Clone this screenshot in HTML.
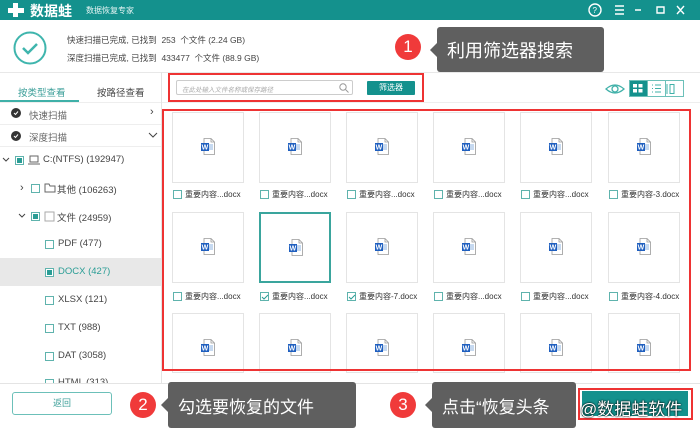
<!DOCTYPE html>
<html><head><meta charset="utf-8"><style>
*{margin:0;padding:0;box-sizing:border-box}
body{width:700px;height:428px;overflow:hidden;background:#fff;font-family:"Liberation Sans","Noto Sans CJK SC",sans-serif;position:relative;color:#333}
.a{position:absolute}
.t{font-size:9px;color:#444;white-space:nowrap}
.cb{position:absolute;width:9px;height:9px;border:1px solid #5fb3ad;background:#fff}
.card{position:absolute;width:72px;height:71px;border:1px solid #e4e4e4;background:#fff}
.w{position:absolute;left:28px;top:25px;width:14px;height:17px}
.lbl{position:absolute;font-size:8px;color:#333;white-space:nowrap}
.bub{position:absolute;background:#5f5f5f;color:#fff;font-size:17px;border-radius:3px;display:flex;align-items:center;padding-left:10px}
.bub:before{content:"";position:absolute;left:-7px;top:50%;margin-top:-7px;border:7px solid transparent;border-left:0;border-right-color:#5f5f5f}
.num{position:absolute;width:26px;height:26px;border-radius:50%;background:#f03a3a;color:#fff;font-size:17px;text-align:center;line-height:26px}
.tree{position:absolute;font-size:9.5px;color:#444;white-space:nowrap}
</style></head><body>
<!-- title bar -->
<div class="a" style="left:0;top:0;width:700px;height:20px;background:#14918d"></div>
<svg class="a" style="left:7px;top:2px" width="18" height="16"><path d="M6 1h5v5h6v5h-6v4H6v-4H1V6h5z" fill="#fff"/></svg>
<div class="a" style="left:30px;top:1px;color:#fff;font-size:14px;font-weight:bold">数据蛙</div>
<div class="a" style="left:86px;top:5px;color:#e8f6f5;font-size:8px">数据恢复专家</div>
<svg class="a" style="left:588px;top:3px" width="105" height="14" fill="none" stroke="#fff" stroke-width="1.4"><circle cx="7" cy="7" r="6"/><text x="4.5" y="10" font-size="8" fill="#fff" stroke="none" font-family="Liberation Sans">?</text><path d="M27 3h9M27 7h9M27 11h9M47 7h6M69 4h7v6h-7zM89 3l7 8M96 3l-7 8"/></svg>
<!-- header -->
<svg class="a" style="left:13px;top:31px" width="34" height="34" fill="none" stroke="#3fb5ad" stroke-width="2"><circle cx="17" cy="17" r="15.5"/><path d="M10 17l5 5 9-9" stroke-width="2.5"/></svg>
<div class="t a" style="left:67px;top:34px;font-size:8.5px">快速扫描已完成, 已找到 &nbsp;253 &nbsp;个文件 (2.24 GB)</div>
<div class="t a" style="left:67px;top:52px;font-size:8.5px">深度扫描已完成, 已找到 &nbsp;433477 &nbsp;个文件 (88.9 GB)</div>
<div class="a" style="left:0;top:72px;width:700px;height:1px;background:#e8e8e8"></div>
<!-- tabs -->
<div class="a" style="left:18px;top:85px;font-size:9.5px;color:#3a9e98">按类型查看</div>
<div class="a" style="left:97px;top:85px;font-size:9.5px;color:#444">按路径查看</div>
<div class="a" style="left:0;top:100px;width:79px;height:2px;background:#3fb0a8"></div>
<div class="a" style="left:161px;top:72px;width:1px;height:311px;background:#e4e4e4"></div>
<div class="a" style="left:0;top:102px;width:161px;height:1px;background:#eee"></div>
<!-- search -->
<div class="a" style="left:176px;top:80px;width:177px;height:15px;border:1px solid #ccc;border-radius:2px"></div>
<div class="a" style="left:182px;top:84px;font-size:6.5px;color:#aaa;font-style:italic">在此处输入文件名称或保存路径</div>
<svg class="a" style="left:339px;top:83px" width="10" height="10" fill="none" stroke="#999"><circle cx="4" cy="4" r="3.2"/><path d="M6.5 6.5l3 3"/></svg>
<div class="a" style="left:367px;top:81px;width:48px;height:14px;background:#14918d;color:#fff;font-size:8px;text-align:center;line-height:14px;border-radius:1px">筛选器</div>
<div class="a" style="left:168px;top:73px;width:256px;height:29px;border:2px solid #ee3333"></div>
<svg class="a" style="left:605px;top:82px" width="20" height="14" fill="none" stroke="#3fb0a8" stroke-width="1.3"><path d="M1 7Q10-1 19 7Q10 15 1 7z"/><circle cx="10" cy="7" r="3"/></svg>
<div class="a" style="left:629px;top:80px;width:55px;height:17px;border:1px solid #6cc0b9"></div>
<div class="a" style="left:630px;top:81px;width:17px;height:15px;background:#14918d"></div>
<svg class="a" style="left:633px;top:84px" width="10" height="9" fill="#fff"><rect x="0" y="0" width="4" height="3.5"/><rect x="5.5" y="0" width="4" height="3.5"/><rect x="0" y="5" width="4" height="3.5"/><rect x="5.5" y="5" width="4" height="3.5"/></svg>
<svg class="a" style="left:652px;top:84px" width="30" height="10" fill="none" stroke="#3fb0a8"><path d="M0 1h1M3 1h6M0 4.5h1M3 4.5h6M0 8h1M3 8h6"/><path d="M15 0h-0v10M18 0.5h4v9h-4z"/></svg>
<div class="a" style="left:647px;top:80px;width:1px;height:17px;background:#6cc0b9"></div>
<div class="a" style="left:665px;top:80px;width:1px;height:17px;background:#6cc0b9"></div>
<div class="a" style="left:162px;top:102px;width:538px;height:1px;background:#eee"></div>
<!-- left tree -->
<svg class="a" style="left:11px;top:108px" width="12" height="36"><circle cx="5" cy="5" r="5" fill="#333"/><path d="M3 5l1.5 1.5L7 3.5" stroke="#fff" fill="none"/><circle cx="5" cy="28" r="5" fill="#333"/><path d="M3 28l1.5 1.5L7 26.5" stroke="#fff" fill="none"/></svg>
<div class="tree" style="left:29px;top:108px;color:#666">快速扫描</div>
<div class="tree" style="left:150px;top:106px;font-size:11px">›</div>
<div class="a" style="left:0;top:124px;width:161px;height:1px;background:#eee"></div>
<div class="tree" style="left:29px;top:130px;color:#666">深度扫描</div>
<svg class="a" style="left:148px;top:132px" width="10" height="7" fill="none" stroke="#444"><path d="M1 1l4 4 4-4"/></svg>
<div class="a" style="left:0;top:146px;width:161px;height:1px;background:#eee"></div>
<svg class="a" style="left:2px;top:157px" width="8" height="6" fill="none" stroke="#444"><path d="M1 1l3 3 3-3"/></svg>
<div class="cb" style="left:15px;top:156px"></div><div class="a" style="left:17px;top:158px;width:5px;height:5px;background:#2a9d95"></div>
<svg class="a" style="left:28px;top:155px" width="12" height="11" fill="none" stroke="#666"><rect x="2" y="1" width="8" height="6"/><path d="M0 9h12"/></svg>
<div class="tree" style="left:43px;top:154px">C:(NTFS) (192947)</div>
<div class="tree" style="left:20px;top:182px;font-size:11px">›</div>
<div class="cb" style="left:31px;top:184px"></div>
<svg class="a" style="left:44px;top:183px" width="12" height="10" fill="none" stroke="#666"><path d="M1 1h4l1 2h5v6H1z"/></svg>
<div class="tree" style="left:57px;top:182px">其他 (106263)</div>
<svg class="a" style="left:18px;top:213px" width="8" height="6" fill="none" stroke="#444"><path d="M1 1l3 3 3-3"/></svg>
<div class="cb" style="left:31px;top:212px"></div><div class="a" style="left:33px;top:214px;width:5px;height:5px;background:#2a9d95"></div>
<svg class="a" style="left:44px;top:211px" width="11" height="11" fill="none" stroke="#aaa"><rect x="1" y="1" width="9" height="9"/></svg>
<div class="tree" style="left:57px;top:210px">文件 (24959)</div>
<div class="cb" style="left:45px;top:240px"></div><div class="tree" style="left:58px;top:238px">PDF (477)</div>
<div class="a" style="left:0;top:258px;width:161px;height:28px;background:#e8e8e8"></div>
<div class="cb" style="left:45px;top:268px"></div><div class="a" style="left:47px;top:270px;width:5px;height:5px;background:#2a9d95"></div>
<div class="tree" style="left:58px;top:266px;color:#2a9d95">DOCX (427)</div>
<div class="cb" style="left:45px;top:296px"></div><div class="tree" style="left:58px;top:294px">XLSX (121)</div>
<div class="cb" style="left:45px;top:324px"></div><div class="tree" style="left:58px;top:322px">TXT (988)</div>
<div class="cb" style="left:45px;top:352px"></div><div class="tree" style="left:58px;top:350px">DAT (3058)</div>
<div class="cb" style="left:45px;top:379px"></div><div class="tree" style="left:58px;top:377px">HTML (313)</div>
<!-- grid -->
<div id="g"></div>
<div class="a" style="left:162px;top:109px;width:529px;height:262px;border:2px solid #ee3333"></div>
<!-- bottom -->
<div class="a" style="left:0;top:383px;width:700px;height:45px;background:#fff;border-top:1px solid #e4e4e4"></div>
<div class="a" style="left:12px;top:392px;width:100px;height:23px;border:1px solid #6cc0b9;border-radius:3px;color:#3a9e98;font-size:9px;text-align:center;line-height:21px">返回</div>
<div class="num" style="left:130px;top:392px">2</div>
<div class="bub" style="left:168px;top:382px;width:188px;height:46px">勾选要恢复的文件</div>
<div class="num" style="left:390px;top:392px">3</div>
<div class="bub" style="left:432px;top:382px;width:144px;height:46px">点击“恢复头条</div>
<div class="a" style="left:582px;top:391px;width:106px;height:25px;background:#14918d"></div>
<div class="a" style="left:578px;top:388px;width:115px;height:32px;border:2px solid #ee3333"></div>
<div class="a" style="left:580px;top:395px;font-size:17px;color:#fff;text-shadow:0 0 2px #000,0 0 1px #000">@数据蛙软件</div>
<div class="num" style="left:395px;top:34px">1</div>
<div class="bub" style="left:437px;top:27px;width:167px;height:45px;font-size:18px">利用筛选器搜索</div>
<script>
var g=document.getElementById('g'),xs=[172,259,346,433,520,608],ys=[112,212,313],h='';
var labels=[['重要内容...docx','重要内容...docx','重要内容...docx','重要内容...docx','重要内容...docx','重要内容-3.docx'],['重要内容...docx','重要内容...docx','重要内容-7.docx','重要内容...docx','重要内容...docx','重要内容-4.docx']];
var w='<svg class="w" viewBox="0 0 14 17"><path d="M3 0.5h7l3.5 3.5v12.5H3z" fill="#fff" stroke="#999" stroke-width="0.8"/><path d="M10 0.5v3.5h3.5" fill="none" stroke="#999" stroke-width="0.8"/><path d="M8 7h4M8 9h4M8 11h4" stroke="#6a9bd8" stroke-width="0.8"/><rect x="0" y="5" width="8" height="8" fill="#1f5fbf"/><text x="0.6" y="11.6" font-size="7" font-weight="bold" fill="#fff" font-family="Liberation Sans">W</text></svg>';
for(var r=0;r<3;r++)for(var c=0;c<6;c++){var sel=(r==1&&c==1);
h+='<div class="card" style="left:'+xs[c]+'px;top:'+ys[r]+'px;'+(r==2?'height:60px;':'')+(sel?'border:2px solid #3aa59d;':'')+'">'+w+'</div>';
if(r<2){var ly=ys[r]+(r==0?78:80);
h+='<div class="cb" style="left:'+(xs[c]+1)+'px;top:'+ly+'px"></div>';
if(r==1&&(c==1||c==2))h+='<svg class="a" style="left:'+(xs[c]+2)+'px;top:'+(ly+1)+'px" width="8" height="8"><path d="M1 4l2 2 4-4" stroke="#2a9d95" fill="none"/></svg>';
h+='<div class="lbl" style="left:'+(xs[c]+13)+'px;top:'+(ly-1)+'px">'+labels[r][c]+'</div>';}}
g.innerHTML=h;
</script>
</body></html>
